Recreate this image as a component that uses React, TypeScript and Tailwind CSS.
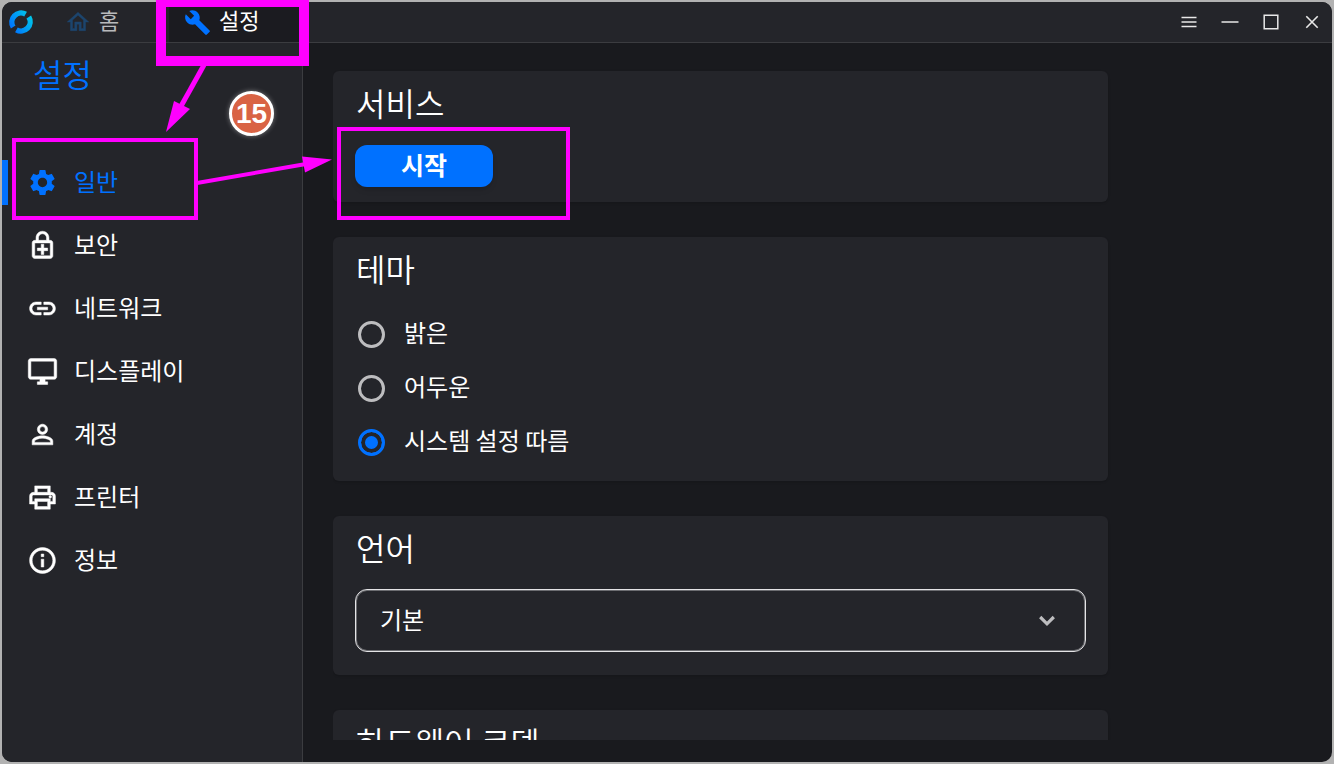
import { useState } from 'react'
import {
  MdBuild,
  MdInfoOutline,
  MdLink,
  MdOutlineDesktopWindows,
  MdOutlineEnhancedEncryption,
  MdOutlineHome,
  MdOutlinePrint,
  MdPersonOutline,
  MdSettings,
} from 'react-icons/md'

const navItems = [
  { label: '일반', icon: MdSettings },
  { label: '보안', icon: MdOutlineEnhancedEncryption },
  { label: '네트워크', icon: MdLink },
  { label: '디스플레이', icon: MdOutlineDesktopWindows },
  { label: '계정', icon: MdPersonOutline },
  { label: '프린터', icon: MdOutlinePrint },
  { label: '정보', icon: MdInfoOutline },
]

const themes = ['밝은', '어두운', '시스템 설정 따름']

function Logo() {
  return (
    <svg width="26" height="26" viewBox="0 0 26 26" fill="none" aria-hidden="true">
      <defs>
        <linearGradient id="logo" x1="3" y1="20" x2="23" y2="6" gradientUnits="userSpaceOnUse">
          <stop stopColor="#0071ff" />
          <stop offset="1" stopColor="#00c8e8" />
        </linearGradient>
      </defs>
      <path
        d="M5.200 18A9.200 9.200 0 0 1 17.600 5.200M20.800 8A9.200 9.200 0 0 1 8.400 20.800"
        stroke="url(#logo)"
        strokeWidth="5.4"
      />
    </svg>
  )
}

function TitleBar() {
  return (
    <header className="flex h-[41px] shrink-0 items-stretch border-b border-[#3b3c40] bg-[#24252a]">
      <div className="flex w-[52px] items-center pb-px pl-[6px]">
        <Logo />
      </div>
      <button className="flex w-[115px] items-center gap-2 pl-[11px] text-[22px] leading-none text-[#b9babc]">
        <MdOutlineHome size={26} strokeWidth="0.4" className="text-[#1c456d] [&>path[fill=none]]:stroke-none" />
        <span className="pb-[6px]">홈</span>
      </button>
      <button className="flex w-[133px] items-center gap-2 bg-[#1b1b20] pl-[15px] text-[22px] leading-none text-white">
        <MdBuild size={27} className="text-[#0071ff]" />
        <span className="pb-[6px]">설정</span>
      </button>
      <div className="ml-auto flex text-[#e8e8e8]">
        <button aria-label="메뉴" className="flex w-[41px] items-center justify-center">
          <svg width="16" height="16" viewBox="0 0 16 16" stroke="currentColor" strokeWidth="1.4">
            <path d="M.5 3.5h15M.5 8h15M.5 12.5h15" />
          </svg>
        </button>
        <button aria-label="최소화" className="flex w-[41px] items-center justify-center">
          <svg width="18" height="16" viewBox="0 0 18 16" stroke="currentColor" strokeWidth="1.5">
            <path d="M.5 8h17" />
          </svg>
        </button>
        <button aria-label="최대화" className="flex w-[41px] items-center justify-center">
          <svg width="16" height="16" viewBox="0 0 16 16" fill="none" stroke="currentColor" strokeWidth="1.5">
            <path d="M1.2 1.2h13.6v13.6H1.2z" />
          </svg>
        </button>
        <button aria-label="닫기" className="flex w-[41px] items-center justify-center">
          <svg width="14" height="14" viewBox="0 0 14 14" stroke="currentColor" strokeWidth="1.6">
            <path d="M1.3 1.3l11.4 11.4M12.7 1.3L1.3 12.7" />
          </svg>
        </button>
      </div>
    </header>
  )
}

function Sidebar({ active, onSelect }: { active: string; onSelect: (label: string) => void }) {
  return (
    <aside className="w-[301px] shrink-0 border-r border-[#3b3c40] bg-[#24252a]">
      <h1 className="pt-[6px] pl-[31px] text-[32px] leading-[48px] font-[350] text-[#0071ff]">설정</h1>
      <nav className="mt-[54px]">
        {navItems.map(({ label, icon: Icon }) => {
          const selected = label === active
          return (
            <button
              key={label}
              onClick={() => onSelect(label)}
              className={`flex h-[63px] w-full items-center text-2xl ${selected ? 'text-[#0071ff]' : 'text-white'}`}
            >
              <span className={`h-[45px] w-[6px] ${selected ? 'bg-[#0071ff]' : ''}`} />
              <Icon
                size={31}
                strokeWidth={selected ? '0' : '0.4'}
                className="mr-4 ml-[19px] [&>path[fill=none]]:stroke-none"
              />
              <span className="pb-1">{label}</span>
            </button>
          )
        })}
      </nav>
    </aside>
  )
}

function Card({ title, children }: { title: string; children?: React.ReactNode }) {
  return (
    <section className="w-full max-w-[775px] shrink-0 rounded-md bg-[#24252a] px-[22px] pt-2 shadow-sm">
      <h2 className="pl-px text-[32px] leading-[46px] font-[350]">{title}</h2>
      {children}
    </section>
  )
}

// Marker rectangles, arrows and the step number over the window
function Annotations() {
  return (
    <div className="pointer-events-none absolute inset-0 overflow-hidden">
      <svg className="absolute top-0 left-0" width="640" height="240" viewBox="0 0 640 240" fill="none" stroke="#ff00ff">
        <rect x="161" y="2" width="143" height="59" strokeWidth="10" />
        <rect x="14" y="140" width="182" height="78" strokeWidth="4" />
        <rect x="339" y="129" width="229" height="89" strokeWidth="4" />
        <path d="M204 65L180 108" strokeWidth="5" />
        <path d="M197 183L306 164" strokeWidth="4" />
        <path d="M166 132L174 101L190 109Z M332 159.500L302 156.500L305 172.500Z" fill="#ff00ff" stroke="none" />
      </svg>
      <div className="absolute top-[91px] left-[229px] flex size-[45px] items-center justify-center rounded-full border-3 border-white bg-[#d96344] font-['Liberation_Sans',sans-serif] text-[28px] font-bold text-white shadow-[0_0_5px_rgba(255,255,255,0.4)]">
        15
      </div>
    </div>
  )
}

export default function App() {
  const [active, setActive] = useState('일반')
  const [theme, setTheme] = useState('시스템 설정 따름')

  return (
    <div className="relative h-screen bg-[#b2b2b2] p-0.5 font-['Noto_Sans_CJK_KR',sans-serif] text-white">
      <div className="flex h-full flex-col overflow-hidden rounded-[10px] bg-[#191a1e]">
        <TitleBar />
        <div className="flex min-h-0 flex-1">
          <Sidebar active={active} onSelect={setActive} />
          <main className="min-w-0 flex-1 pb-[22px] pl-[30px]">
            <div className="flex h-full flex-col gap-[35px] overflow-hidden pt-7">
              <Card title="서비스">
                <button className="mt-5 mb-[15px] flex h-[42px] w-[138px] items-center justify-center rounded-xl bg-[#0071ff] pb-0.5 text-[25px] font-bold shadow-md">
                  시작
                </button>
              </Card>

              <Card title="테마">
                <div className="mt-4 pb-3">
                  {themes.map((name) => (
                    <label key={name} className="flex h-[54px] items-center gap-[19px] pl-[3px] text-2xl">
                      <input
                        type="radio"
                        name="theme"
                        checked={theme === name}
                        onChange={() => setTheme(name)}
                        className="size-[27px] appearance-none rounded-full border-3 border-[#bdbdbf] checked:border-[#0071ff] checked:bg-[#0071ff] checked:shadow-[inset_0_0_0_4px_#24252a]"
                      />
                      <span className="pb-1">{name}</span>
                    </label>
                  ))}
                </div>
              </Card>

              <Card title="언어">
                <div className="relative mt-[19px] mb-[23px]">
                  <select
                    aria-label="언어"
                    className="block h-[63px] w-full appearance-none rounded-xl border border-[#e4e4e6] bg-transparent px-6 pb-1 text-2xl shadow-[inset_0_0_0_1px_#6c6d71]"
                  >
                    <option>기본</option>
                  </select>
                  <svg
                    className="pointer-events-none absolute top-[26px] right-[31px]"
                    width="16"
                    height="12"
                    viewBox="0 0 16 12"
                    fill="none"
                    stroke="#bdbdbf"
                    strokeWidth="3.2"
                  >
                    <path d="M1.200 2L8 8.800L14.800 2" />
                  </svg>
                </div>
              </Card>

              <Card title="하드웨어 코덱">
                <div className="h-24" />
              </Card>
            </div>
          </main>
        </div>
      </div>
      <Annotations />
    </div>
  )
}
